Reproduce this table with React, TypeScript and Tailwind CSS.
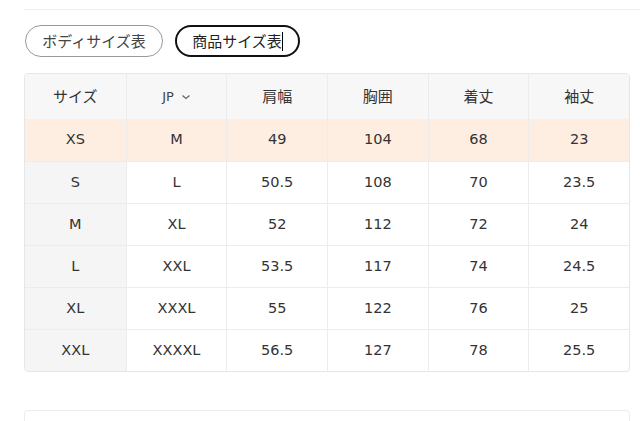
import React from "react";

const font = { fontFamily: '"DejaVu Sans", "Noto Sans CJK JP", "Noto Sans", sans-serif' };
const jp = { fontFamily: '"Noto Sans CJK JP", "Noto Sans", sans-serif' };

const headers = ["サイズ", "JP", "肩幅", "胸囲", "着丈", "袖丈"];
const rows = [
  ["XS", "M", "49", "104", "68", "23"],
  ["S", "L", "50.5", "108", "70", "23.5"],
  ["M", "XL", "52", "112", "72", "24"],
  ["L", "XXL", "53.5", "117", "74", "24.5"],
  ["XL", "XXXL", "55", "122", "76", "25"],
  ["XXL", "XXXXL", "56.5", "127", "78", "25.5"],
];

export default function App() {
  return (
    <div className="w-[640px] h-[421px] bg-white overflow-hidden text-[#333]" style={font}>
      <div className="ml-[24px] mt-[9px] h-px bg-[#f0f0f0]" />
      <div className="ml-[25px] mt-[15px] flex gap-[12px] items-center" style={jp}>
        <div className="h-[32px] w-[138px] flex items-center justify-center rounded-full border border-[#9a9a9a] text-[15px] text-[#444]">
          ボディサイズ表
        </div>
        <div className="h-[32px] w-[125px] flex items-center justify-center rounded-full border-2 border-[#111] text-[15px] text-[#222]">
          商品サイズ表
          <span className="w-px h-[19px] bg-black" />
        </div>
      </div>
      <div className="ml-[24px] mt-[16px] w-[606px] border border-[#e6e6e6] rounded-[4px] overflow-hidden text-[14.5px]">
        <div className="grid grid-cols-6 h-[45px] bg-[#f7f7f8]">
          {headers.map((h, i) => (
            <div
              key={i}
              className={`flex items-center justify-center ${i > 0 ? "border-l border-[#ececec]" : ""} ${
                i === 1 ? "text-[13px] text-[#444]" : "text-[15px]"
              }`}
              style={i === 1 ? font : jp}
            >
              {h}
              {i === 1 && (
                <svg width="10" height="10" viewBox="0 0 10 10" className="ml-[7px]">
                  <path d="M1.5 3.5 L5 6.5 L8.5 3.5" fill="none" stroke="#666" strokeWidth="1.3" />
                </svg>
              )}
            </div>
          ))}
        </div>
        {rows.map((r, ri) => (
          <div
            key={ri}
            className={`grid grid-cols-6 h-[42px] ${ri === 0 ? "bg-[#fdeee1]" : "border-t border-[#ececec]"}`}
          >
            {r.map((c, ci) => (
              <div
                key={ci}
                className={`flex items-center justify-center ${ci > 0 ? "border-l border-[#ececec]" : ""} ${
                  ri > 0 && ci === 0 ? "bg-[#f5f5f5]" : ""
                }`}
              >
                {c}
              </div>
            ))}
          </div>
        ))}
      </div>
      <div className="ml-[24px] mt-[38px] w-[606px] h-[40px] border border-[#ececec] rounded-[4px]" />
    </div>
  );
}
